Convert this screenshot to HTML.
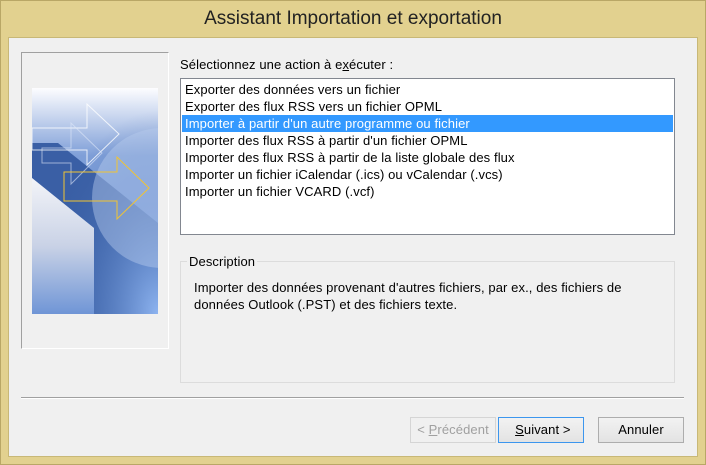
<!DOCTYPE html>
<html><head><style>
*{margin:0;padding:0;box-sizing:border-box}
body{width:706px;height:465px;background:#e2d18f;position:relative;overflow:hidden;font-family:"Liberation Sans",sans-serif;font-size:13px;letter-spacing:0.1px;color:#000}
.frame{position:absolute;left:0;top:0;width:706px;height:465px;border:1px solid #b9a766}
.title{position:absolute;left:0;top:8px;width:706px;text-align:center;font-size:19px;letter-spacing:0;color:#222}
.client{position:absolute;left:8px;top:37px;width:690px;height:420px;background:#f0f0f0;border:1px solid #c8b877}
.abs{position:absolute;white-space:nowrap}
.lp{left:21px;top:52px;width:148px;height:297px;border:1px solid #a0a0a0;border-right-color:#fff;border-bottom-color:#fff}
.list{left:180px;top:78px;width:495px;height:157px;background:#fff;border:1px solid #828790}
.item{position:absolute;left:1px;width:491px;height:17px;line-height:17px;padding-left:3px;white-space:nowrap}
.sel{background:#3399ff;color:#fff}
.grp{left:180px;top:261px;width:495px;height:122px;border:1px solid #dcdcdc}
.btn{position:absolute;top:417px;height:26px;width:86px;border:1px solid #adadad;background:linear-gradient(#f2f2f2,#e3e3e3);text-align:center;line-height:24px}
</style></head><body>
<div class="frame"></div>
<div class="title">Assistant Importation et exportation</div>
<div class="client"></div>
<div class="abs lp"></div>
<svg class="abs" style="left:32px;top:88px" width="126" height="226" viewBox="0 0 126 226">
<defs>
<linearGradient id="g1" x1="0" y1="0" x2="0" y2="1"><stop offset="0" stop-color="#fdfdff"/><stop offset="0.3" stop-color="#7f9fd8"/><stop offset="1" stop-color="#6c95dc"/></linearGradient>
<linearGradient id="g2" x1="0" y1="0" x2="0" y2="1"><stop offset="0" stop-color="#f3f4f8"/><stop offset="0.5" stop-color="#c9d2e6"/><stop offset="1" stop-color="#6f95d6"/></linearGradient>
<radialGradient id="g3" cx="1" cy="1" r="0.9"><stop offset="0" stop-color="#8eb4f0"/><stop offset="1" stop-color="#3c64aa" stop-opacity="0"/></radialGradient>
</defs>
<rect width="126" height="226" fill="url(#g1)"/>
<polygon points="0,55 26,55 126,135 126,226 62,226 62,140 0,90" fill="#3a5fa5"/>
<rect width="126" height="226" fill="url(#g3)"/>
<circle cx="130" cy="110" r="70" fill="#b9cdee" opacity="0.45"/>
<polygon points="0,90 62,140 62,226 0,226" fill="url(#g2)"/>
<polygon points="0,40 55,40 55,16 87,46 55,77 55,62 0,62" fill="none" stroke="#fff" stroke-width="1" opacity="0.8"/>
<polygon points="10,60 39,60 39,35 70,65 39,96 39,75 10,75" fill="none" stroke="#dfe8f8" stroke-width="1" opacity="0.6"/>
<polygon points="32,84 85,84 85,69 117,100 85,131 85,113 32,113" fill="none" stroke="#f2c431" stroke-width="1"/>
</svg>
<div class="abs" style="left:180px;top:57px">Sélectionnez une action à e<u>x</u>écuter :</div>
<div class="abs list">
<div class="item" style="top:2px">Exporter des données vers un fichier</div>
<div class="item" style="top:19px">Exporter des flux RSS vers un fichier OPML</div>
<div class="item sel" style="top:36px">Importer à partir d'un autre programme ou fichier</div>
<div class="item" style="top:53px">Importer des flux RSS à partir d'un fichier OPML</div>
<div class="item" style="top:70px">Importer des flux RSS à partir de la liste globale des flux</div>
<div class="item" style="top:87px">Importer un fichier iCalendar (.ics) ou vCalendar (.vcs)</div>
<div class="item" style="top:104px">Importer un fichier VCARD (.vcf)</div>
</div>
<div class="abs grp"></div>
<div class="abs" style="left:187px;top:254px;background:#f0f0f0;padding:0 2px">Description</div>
<div class="abs" style="left:194px;top:279px;line-height:17px">Importer des données provenant d'autres fichiers, par ex., des fichiers de<br>données Outlook (.PST) et des fichiers texte.</div>
<div class="abs" style="left:21px;top:397px;width:663px;height:2px;border-top:1px solid #a0a0a0;border-bottom:1px solid #fff"></div>
<div class="btn" style="left:410px;width:86px;color:#a0a0a0;border-color:#d5d5d5;background:#f0f0f0">&lt; <u>P</u>récédent</div>
<div class="btn" style="left:498px;border-color:#3c96ee">&nbsp;<u>S</u>uivant &gt;</div>
<div class="btn" style="left:598px">Annuler</div>
</body></html>
